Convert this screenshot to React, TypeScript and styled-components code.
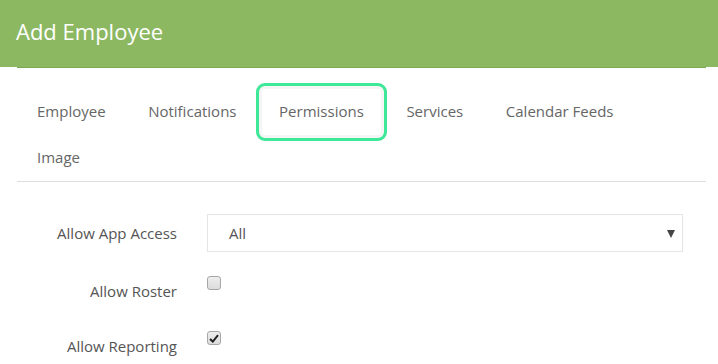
import React from 'react'
import styled, { createGlobalStyle, css } from 'styled-components'

const GlobalStyle = createGlobalStyle`
  body {
    margin: 0;
    background: #fff;
    font-family: 'Open Sans', 'Noto Sans', sans-serif;
  }
`

const Header = styled.header`
  height: 67px;
  background: #8cb862;
  padding-left: 16px;
  display: flex;
  align-items: center;
  box-sizing: border-box;
`

const Title = styled.h1`
  margin: 0 0 5px 0;
  font-size: 22px;
  font-weight: 400;
  color: #fff;
`

const Body = styled.div`
  margin-left: 17px;
  margin-right: 12px;
  border-top: 1px solid #7ea755;
`

const TabList = styled.nav`
  display: flex;
  flex-wrap: wrap;
  column-gap: 8.6px;
  padding: 21px 0 0 3px;
  border-bottom: 1px solid #dddddd;
`

const Tab = styled.div<{ $active?: boolean }>`
  height: 46px;
  line-height: 45px;
  padding: 0 17px;
  font-size: 15px;
  color: #666;
  border-radius: 3px;
  ${p => p.$active && css`
    outline: 3px solid #3de898;
    outline-offset: 3px;
    box-shadow: 0 0 0 6px rgba(0, 0, 0, 0.04);
  `}
`

const Form = styled.form`
  padding: 32px 23px 0 0;
`

const FieldRow = styled.div<{ $gap: number }>`
  display: grid;
  grid-template-columns: 160px 1fr;
  column-gap: 30px;
  margin-bottom: ${p => p.$gap}px;
`

const Label = styled.label<{ $top?: boolean }>`
  text-align: right;
  font-size: 15px;
  line-height: 20px;
  color: #555;
  align-self: ${p => (p.$top ? 'start' : 'center')};
  padding-top: ${p => (p.$top ? 7 : 0)}px;
`

const Select = styled.div`
  height: 38px;
  box-sizing: border-box;
  border: 1px solid #e5e5e5;
  display: flex;
  align-items: center;
  justify-content: space-between;
  padding: 0 7px 0 21px;
  font-size: 15px;
  color: #555;
`

const Caret = styled.span`
  width: 0;
  height: 0;
  border-left: 4px solid transparent;
  border-right: 4px solid transparent;
  border-top: 8px solid #444;
  margin-top: 1px;
`

const CheckCell = styled.div`
  height: 40px;
`

const CheckBox = styled.span`
  width: 14px;
  height: 14px;
  margin-top: 2px;
  box-sizing: border-box;
  border: 1px solid #a7a7a7;
  border-radius: 3px;
  background: linear-gradient(#eeeeee, #dcdcdc);
  display: flex;
  align-items: center;
  justify-content: center;
`

const fields = [
  { label: 'Allow Roster', checked: false },
  { label: 'Allow Reporting', checked: true },
]

const tabs = ['Employee', 'Notifications', 'Permissions', 'Services', 'Calendar Feeds', 'Image']

export default function App() {
  return (
    <>
      <GlobalStyle />
      <Header>
        <Title>Add Employee</Title>
      </Header>
      <Body>
        <TabList>
          {tabs.map(t => (
            <Tab key={t} $active={t === 'Permissions'}>{t}</Tab>
          ))}
        </TabList>
        <Form>
          <FieldRow $gap={22}>
            <Label>Allow App Access</Label>
            <Select>
              All
              <Caret />
            </Select>
          </FieldRow>
          {fields.map(f => (
            <FieldRow key={f.label} $gap={15}>
              <Label $top>{f.label}</Label>
              <CheckCell>
                <CheckBox>
                  {f.checked && (
                    <svg width="10" height="9" viewBox="0 0 10 9">
                      <path d="M1 5 L3.8 7.6 L9 1.2" fill="none" stroke="#222" strokeWidth="2" />
                    </svg>
                  )}
                </CheckBox>
              </CheckCell>
            </FieldRow>
          ))}
        </Form>
      </Body>
    </>
  )
}
